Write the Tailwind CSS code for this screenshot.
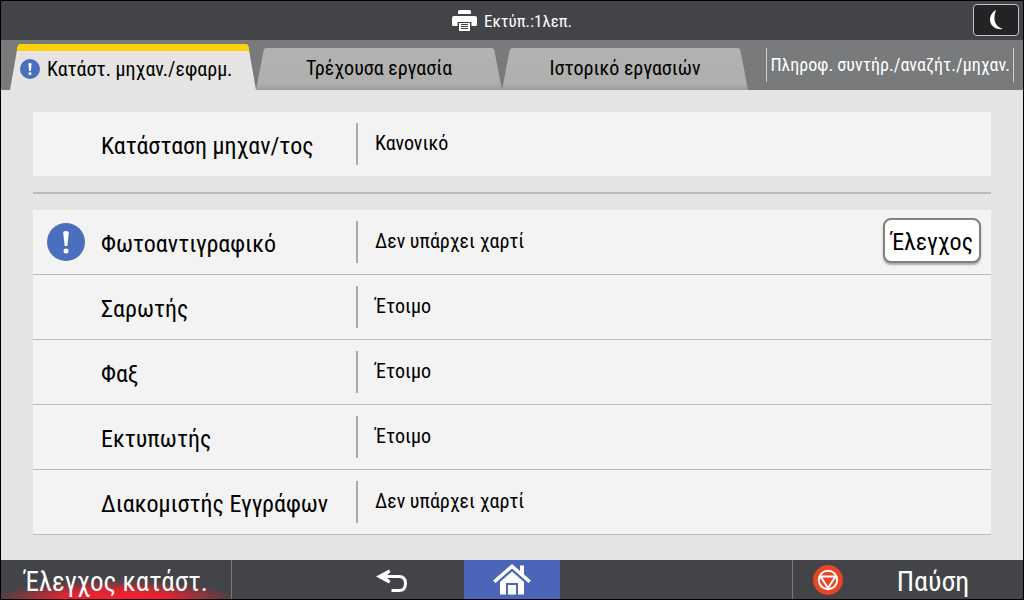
<!DOCTYPE html>
<html lang="el">
<head>
<meta charset="utf-8">
<meta name="viewport" content="width=device-width, initial-scale=1">
<title>Έλεγχος κατάστασης</title>
<script src="https://cdn.jsdelivr.net/npm/@tailwindcss/browser@4"></script>
</head>
<body class="flex min-h-screen flex-col border border-black bg-[#e5e4e2] font-['Roboto_Condensed','Roboto','Open_Sans',sans-serif] text-black">

<header class="relative flex h-[39px] items-center justify-center bg-[#434447] text-white">
  <div class="flex items-center gap-[7px]">
    <svg class="h-[21px] w-[25px]" viewBox="0 0 25 21" fill="#fff" aria-hidden="true">
      <path d="M6 1.500Q6 0 7.500 0h10Q19 0 19 1.500V4H6z"/>
      <path d="M2 6h21q2 0 2 2v6.500q0 1.500-1.500 1.500H19.500v-4h-14v4H1.500Q0 16 0 14.500V8q0-2 2-2z"/>
      <path fill-rule="evenodd" d="M7 13h11v8H7zM9 14v1h7v-1zM9 16v1h7v-1zM9 18v1h7v-1z"/>
    </svg>
    <p class="text-[17px] leading-6">Εκτύπ.:1λεπ.</p>
  </div>
  <button type="button" aria-label="Αναστολή" class="absolute top-[3px] right-1 flex h-8 w-[46px] items-center justify-center rounded-[4px] border border-[#c4c4c4] bg-[#242225]">
    <svg class="h-5 w-[13px]" viewBox="0 0 13 20" fill="#fff" aria-hidden="true"><path d="M6 0C2 2 0 6 0 9.500C0 15.500 5 20 13 19C8 17.500 5 14 4.500 9.500C4.200 6 5 3 6 0z"/></svg>
  </button>
</header>

<div class="flex h-[50px] items-end justify-between bg-[#787a7b] px-[9px]">
  <div role="tablist" class="flex items-end">
    <button type="button" role="tab" aria-selected="true" class="relative h-[46px] w-[246px]">
      <svg class="absolute inset-0 size-full" viewBox="0 0 246 46" preserveAspectRatio="none" aria-hidden="true">
        <path fill="#e5e4e2" d="M0 46L7.500 3Q8 0 11 0H235Q238 0 238.500 3L246 46z"/>
        <path fill="#fbd206" d="M6.800 7L7.500 3Q8 0 11 0H235Q238 0 238.500 3L239.200 7z"/>
      </svg>
      <span class="relative flex h-full items-center gap-[7px] pt-1 pl-[10px] text-[20px] leading-6 whitespace-nowrap">
        <svg class="size-5 shrink-0" viewBox="0 0 38 38" aria-hidden="true"><circle cx="19" cy="19" r="19" fill="#4a70bd"/><path fill="#fff" d="M16 9.500q0-2 3-2t3 2L20.700 23h-3.400z"/><circle cx="19" cy="28" r="2.800" fill="#fff"/></svg>
        Κατάστ. μηχαν./εφαρμ.
      </span>
    </button>
    <button type="button" role="tab" aria-selected="false" class="relative h-[42px] w-[246px]">
      <svg class="absolute inset-0 size-full" viewBox="0 0 246 42" preserveAspectRatio="none" aria-hidden="true">
        <defs><linearGradient id="tab-shade" x1="0" y1="0" x2="0" y2="1"><stop offset="0" stop-color="#b2b2b0"/><stop offset=".85" stop-color="#afafad"/><stop offset="1" stop-color="#9c9c9b"/></linearGradient></defs>
        <path fill="url(#tab-shade)" d="M0 42L7.500 3Q8 0 11 0H235Q238 0 238.500 3L246 42z"/>
      </svg>
      <span class="relative text-[20px] leading-6">Τρέχουσα εργασία</span>
    </button>
    <button type="button" role="tab" aria-selected="false" class="relative h-[42px] w-[246px]">
      <svg class="absolute inset-0 size-full" viewBox="0 0 246 42" preserveAspectRatio="none" aria-hidden="true">
        <path fill="url(#tab-shade)" d="M0 42L7.500 3Q8 0 11 0H235Q238 0 238.500 3L246 42z"/>
      </svg>
      <span class="relative text-[20px] leading-6">Ιστορικό εργασιών</span>
    </button>
  </div>
  <button type="button" class="mb-2 flex h-[34px] items-center border-x border-[#d0d0d0] px-[3px] text-[18px] leading-6 whitespace-nowrap text-white">Πληροφ. συντήρ./αναζήτ./μηχαν.</button>
</div>

<main class="flex-1 px-8 pt-[22px] pb-6">
  <table class="w-full table-fixed border-separate border-spacing-0 bg-[#f3f3f3]">
    <tbody>
      <tr class="h-16">
        <th scope="row" class="w-[323px] pt-[3px] pl-[68px] text-left text-[24px] leading-8 font-normal">Κατάσταση μηχαν/τος</th>
        <td class="text-[20px]"><div class="flex h-[42px] items-center border-l-2 border-[#aaa] pb-0.5 pl-[17px] leading-6">Κανονικό</div></td>
      </tr>
    </tbody>
  </table>

  <hr class="my-4 border-t-2 border-[#bbb]">

  <table class="w-full table-fixed border-separate border-spacing-0 bg-[#f3f3f3]">
    <tbody>
      <tr class="h-[65px]">
        <th scope="row" class="w-[323px] border-b border-[#bbb] pl-[14px] text-left text-[24px] leading-8 font-normal">
          <div class="flex items-center gap-4">
            <svg class="size-[38px] shrink-0" viewBox="0 0 38 38" role="img" aria-label="Προσοχή"><circle cx="19" cy="19" r="19" fill="#4a70bd"/><path fill="#fff" d="M16.200 10q0-2 2.800-2t2.800 2L20.300 23h-2.600z"/><circle cx="19" cy="28" r="2.500" fill="#fff"/></svg>
            <span class="pt-[3px]">Φωτοαντιγραφικό</span>
          </div>
        </th>
        <td class="border-b border-[#bbb] pr-[10px] text-[20px]">
          <div class="flex items-center justify-between">
            <div class="flex h-[42px] items-center border-l-2 border-[#aaa] pb-0.5 pl-[17px] leading-6">Δεν υπάρχει χαρτί</div>
            <button type="button" class="-mt-2 -mb-1 h-[45px] w-[98px] rounded-lg border-2 border-[#808080] bg-white pt-1 text-[24px] leading-8 shadow-[0_2px_2px_#aaa]">Έλεγχος</button>
          </div>
        </td>
      </tr>
      <tr class="h-[65px]">
        <th scope="row" class="border-b border-[#bbb] pt-[3px] pl-[68px] text-left text-[24px] leading-8 font-normal">Σαρωτής</th>
        <td class="border-b border-[#bbb] text-[20px]"><div class="flex h-[42px] items-center border-l-2 border-[#aaa] pb-0.5 pl-[17px] leading-6">Έτοιμο</div></td>
      </tr>
      <tr class="h-[65px]">
        <th scope="row" class="border-b border-[#bbb] pt-[3px] pl-[68px] text-left text-[24px] leading-8 font-normal">Φαξ</th>
        <td class="border-b border-[#bbb] text-[20px]"><div class="flex h-[42px] items-center border-l-2 border-[#aaa] pb-0.5 pl-[17px] leading-6">Έτοιμο</div></td>
      </tr>
      <tr class="h-[65px]">
        <th scope="row" class="border-b border-[#bbb] pt-[3px] pl-[68px] text-left text-[24px] leading-8 font-normal">Εκτυπωτής</th>
        <td class="border-b border-[#bbb] text-[20px]"><div class="flex h-[42px] items-center border-l-2 border-[#aaa] pb-0.5 pl-[17px] leading-6">Έτοιμο</div></td>
      </tr>
      <tr class="h-[65px]">
        <th scope="row" class="border-b border-[#bbb] pt-[3px] pl-[68px] text-left text-[24px] leading-8 font-normal">Διακομιστής Εγγράφων</th>
        <td class="border-b border-[#bbb] text-[20px]"><div class="flex h-[42px] items-center border-l-2 border-[#aaa] pb-0.5 pl-[17px] leading-6">Δεν υπάρχει χαρτί</div></td>
      </tr>
    </tbody>
  </table>
</main>

<footer class="flex h-[39px] items-stretch bg-[#434447] text-white">
  <button type="button" class="w-[231px] border-r border-[#77787a] bg-[radial-gradient(ellipse_120px_19px_at_50%_100%,#f3222f_0%,#e2232f_45%,transparent_100%)] pt-1 text-[27px] leading-8 whitespace-nowrap">Έλεγχος κατάστ.</button>
  <nav class="grid flex-1 grid-cols-[1fr_96px_1fr]">
    <button type="button" aria-label="Πίσω" class="flex items-center justify-end pr-14">
      <svg class="h-6 w-8" viewBox="0 0 32 24" aria-hidden="true"><path fill="none" stroke="#fff" stroke-width="3" d="M7 8.500H23Q29.500 8.500 29.500 15.500T23 22.500H15.500"/><path fill="#fff" d="M0 8.500L13 1.500L14.500 4L9.500 8.500L14.500 13L13 15.500z"/></svg>
    </button>
    <button type="button" aria-label="Αρχική" class="flex items-center justify-center bg-[#4c65b9]">
      <svg class="h-[31px] w-[38px]" viewBox="0 0 38 31" fill="#fff" aria-hidden="true">
        <path d="M19 0L27 7V1.500h4V10.500L38 16.500L35.500 19L19 4.500L2.500 19L0 16.500z"/>
        <path d="M19 7.500L31 18V30.500H25V19H13V30.500H7V18zM15 21h8v9.500H15z"/>
      </svg>
    </button>
  </nav>
  <button type="button" class="flex w-[231px] items-center border-l border-[#77787a] pl-5 text-[28px] leading-8">
    <svg class="size-[30px] shrink-0" viewBox="0 0 30 30" aria-hidden="true"><circle cx="15" cy="15" r="15" fill="#ea4424"/><circle cx="15" cy="15" r="9.200" fill="none" stroke="#fff" stroke-width="2"/><path fill="none" stroke="#fff" stroke-width="2" stroke-linejoin="round" d="M7.500 11.500H22.500L15 23z"/></svg>
    <span class="flex-1 pt-1 text-center">Παύση</span>
  </button>
</footer>
</body>
</html>
